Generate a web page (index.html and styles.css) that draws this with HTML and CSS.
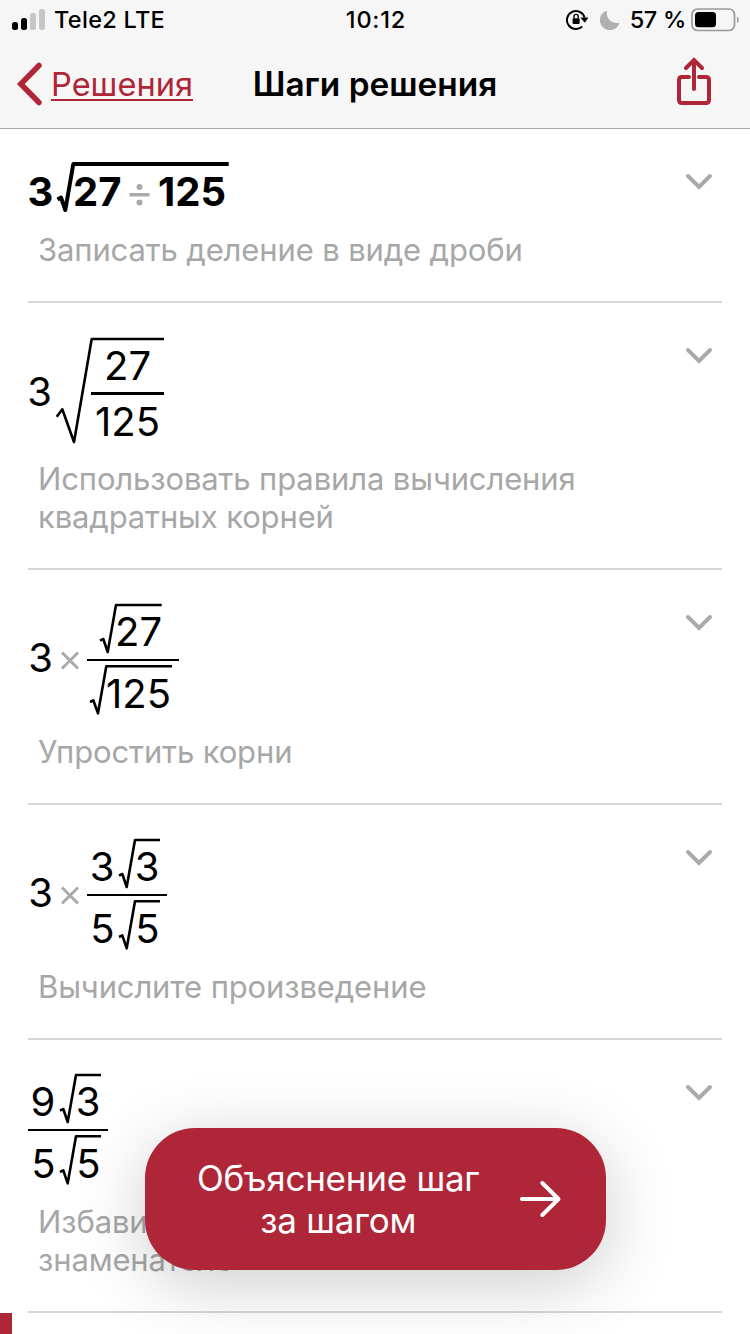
FILE: index.html
```
<!DOCTYPE html>
<html lang="ru">
<head>
<meta charset="utf-8">
<title>Шаги решения</title>
<link rel="stylesheet" href="styles.css">
</head>
<body>
<div class="screen">
  <header class="top">
    <div class="status">
      <div class="status-left">
        <svg class="signal" width="34" height="22" viewBox="0 0 34 22"><rect x="0" y="13" width="6" height="8" rx="2.5"/><rect x="9" y="9" width="6" height="12" rx="2.5"/><rect class="off" x="18" y="4" width="6" height="17" rx="2.5"/><rect class="off" x="27" y="0" width="6" height="21" rx="2.5"/></svg>
        <span class="carrier">Tele2 LTE</span>
      </div>
      <div class="time">10:12</div>
      <div class="status-right">
        <svg class="lock" width="23" height="22" viewBox="0 0 23 22"><path d="M16.200 17.500A9 9 0 1 1 18.600 8.500" fill="none" stroke="#000" stroke-width="2"/><path d="M14.400 8.500h8l-3.600 5.200z"/><rect x="6.600" y="9.300" width="7" height="5.700" rx="1"/><path d="M8 9.500V7.500a2.100 2.100 0 0 1 4.200 0v2" fill="none" stroke="#000" stroke-width="1.400"/></svg>
        <svg class="moon" width="20" height="20" viewBox="0 0 20 20"><path d="M7.300.4A10 10 0 1 0 19.600 12.400 9.600 9.600 0 0 1 7.300.4z"/></svg>
        <span class="percent">57 %</span>
        <svg class="battery" width="49" height="24" viewBox="0 0 49 24"><rect x="1" y="1" width="42.500" height="21.500" rx="5.500" fill="none" stroke="#999" stroke-width="1.700"/><rect x="4" y="4" width="21" height="15.300" rx="3.500"/><path d="M46 8.500q1.800 1 1.800 3.300T46 15z" fill="#999"/></svg>
      </div>
    </div>
    <nav class="nav">
      <a class="back"><svg width="26" height="44" viewBox="0 0 26 44"><path d="M23 3.500 4.800 22 23 40.500"/></svg><span class="back-label">Решения</span></a>
      <h1 class="title">Шаги решения</h1>
      <svg class="share" width="34" height="48" viewBox="0 0 34 48"><path d="M12 19H5q-3 0-3 3v20q0 3 3 3h24q3 0 3-3V22q0-3-3-3h-7M17 31V3M9 10 17 2l8 8"/></svg>
    </nav>
  </header>

  <main class="steps">
    <section class="step">
      <svg class="formula bold" width="220" height="60" viewBox="0 0 220 60">
        <text x="12.500" y="47.400">3</text>
        <path class="root" d="M29.500 40.500 33 38.500 37.300 51 45.300 5H200.700"/>
        <text x="69.300" y="47.400">27</text>
        <rect class="op" x="101.500" y="34" width="20" height="3.500"/><circle class="op" cx="111.500" cy="28" r="3"/><circle class="op" cx="111.500" cy="43.500" r="3"/>
        <text x="164" y="47.400">125</text>
      </svg>
      <p class="note">Записать деление в виде дроби</p>
      <svg class="chevron" width="28" height="18" viewBox="0 0 28 18"><path d="M3 3 14 14 25 3"/></svg>
    </section>

    <section class="step">
      <svg class="formula" width="220" height="115" viewBox="0 0 220 115">
        <text x="11.500" y="72.500">3</text>
        <path class="root" d="M28.700 83.700 34.300 76.300 46 109 63.700 6H136"/>
        <text x="99.500" y="47.300">27</text>
        <rect x="63" y="59" width="73" height="3"/>
        <text x="99.500" y="103.300">125</text>
      </svg>
      <p class="note">Использовать правила вычисления<br>квадратных корней</p>
      <svg class="chevron" width="28" height="18" viewBox="0 0 28 18"><path d="M3 3 14 14 25 3"/></svg>
    </section>

    <section class="step">
      <svg class="formula" width="220" height="121" viewBox="0 0 220 121">
        <text x="12.500" y="71.500">3</text><path class="times" d="M34 52.500 50 68.500M50 52.500 34 68.500"/>
        <path class="root" d="M72 40.700 75.300 39 79.700 52 88 5H133.700"/>
        <text x="110.500" y="46.300">27</text>
        <rect x="59" y="59" width="92" height="2"/>
        <path class="root" d="M62 102 65.300 100.300 70 113.300 78.300 66.300H144"/>
        <text x="110.500" y="107.500">125</text>
      </svg>
      <p class="note">Упростить корни</p>
      <svg class="chevron" width="28" height="18" viewBox="0 0 28 18"><path d="M3 3 14 14 25 3"/></svg>
    </section>

    <section class="step">
      <svg class="formula" width="220" height="121" viewBox="0 0 220 121">
        <text x="12.500" y="71.500">3</text><path class="times" d="M34 52.500 50 68.500M50 52.500 34 68.500"/>
        <text x="74" y="46.300">3</text>
        <path class="root" d="M91 40.700 94.300 39 98.700 52 107 5H132"/>
        <text x="119" y="46.300">3</text>
        <rect x="59" y="59" width="80" height="2"/>
        <text x="74.500" y="107.700">5</text>
        <path class="root" d="M91 102 94.300 100.300 98.700 113.300 107 66.300H132"/>
        <text x="119.500" y="107.700">5</text>
      </svg>
      <p class="note">Вычислите произведение</p>
      <svg class="chevron" width="28" height="18" viewBox="0 0 28 18"><path d="M3 3 14 14 25 3"/></svg>
    </section>

    <section class="step">
      <svg class="formula" width="220" height="121" viewBox="0 0 220 121">
        <text x="15" y="46.300">9</text>
        <path class="root" d="M32 40.700 35.300 39 39.700 52 48 5H73"/>
        <text x="60" y="46.300">3</text>
        <rect x="0" y="59" width="80" height="2"/>
        <text x="15.500" y="107.700">5</text>
        <path class="root" d="M32 102 35.300 100.300 39.700 113.300 48 66.300H73"/>
        <text x="60.500" y="107.700">5</text>
      </svg>
      <p class="note">Избавиться<br>знаменателе</p>
      <svg class="chevron" width="28" height="18" viewBox="0 0 28 18"><path d="M3 3 14 14 25 3"/></svg>
    </section>
  </main>

  <div class="progress"></div>
  <button class="explain">
    <span class="explain-label">Объяснение шаг<br>за шагом</span>
    <svg width="42" height="38" viewBox="0 0 42 38"><path d="M2 19H38.500M22.300 3 38.500 19 22.300 35"/></svg>
  </button>
</div>
</body>
</html>
```
FILE: styles.css
```
* { box-sizing: border-box; }
body {
  margin: 0;
  font-family: Inter, "Liberation Sans", sans-serif;
  color: #000;
  background: #fff;
}
.screen {
  position: relative;
  width: 750px;
  height: 1334px;
  overflow: hidden;
}
.top {
  height: 129px;
  background: #f6f6f6;
  border-bottom: 1px solid #a8a8a8;
}
.status {
  display: grid;
  grid-template-columns: 1fr auto 1fr;
  height: 40px;
  padding: 0 10px 0 12px;
  align-items: center;
  font-size: 23.5px;
  font-weight: 500;
  line-height: 40px;
}
.status-left, .status-right { display: flex; align-items: center; }
.status-right { justify-content: flex-end; }
.off { fill: #c6c6c6; }
.time { letter-spacing: 0.8px; }
.carrier { margin-left: 8px; letter-spacing: 0.3px; }
.lock { margin-right: 11px; }
.moon { fill: #b0b0b0; margin-right: 10px; }
.percent { letter-spacing: -0.3px; }
.battery { margin-left: 5px; }
.nav {
  display: grid;
  grid-template-columns: 1fr auto 1fr;
  align-items: center;
  height: 88px;
  padding: 0 16px;
}
.back { display: flex; align-items: center; color: #af2639; font-size: 32.6px; }
.back svg { fill: none; stroke: #af2639; stroke-width: 5.5; stroke-linecap: round; }
.back-label {
  margin-left: 9px;
  text-decoration: underline;
  text-decoration-thickness: 2px;
  text-underline-offset: 3px;
}
.title { margin: 0; font-size: 33.4px; font-weight: 600; line-height: 40px; }
.share {
  justify-self: end;
  margin: 0 23px 4px 0;
  fill: none;
  stroke: #af2639;
  stroke-width: 4;
  stroke-linecap: round;
  overflow: visible;
}
.steps { padding: 0 28px; }
.step {
  display: grid;
  grid-template-columns: 1fr auto;
  padding: 30px 9px 32px 0;
  border-bottom: 2px solid #d6d6d6;
}
.formula { display: block; grid-column: 1; }
.formula text { font-size: 40px; text-anchor: middle; }
.formula .op { fill: #aaa; }
.times { fill: none; stroke: #aaa; stroke-width: 3; }
.root { fill: none; stroke: #000; stroke-width: 2.6; stroke-linejoin: round; }
.bold text { font-weight: 700; }
.bold .root { stroke-width: 4; }
.note {
  grid-column: 1;
  margin: 12px 0 0 10px;
  font-size: 31px;
  line-height: 38px;
  letter-spacing: -0.13px;
  color: #a7a7a7;
  white-space: nowrap;
}
.chevron {
  grid-column: 2;
  grid-row: 1;
  margin-top: 14px;
  fill: none;
  stroke: #aaa;
  stroke-width: 4;
  stroke-linecap: round;
}
.progress {
  position: absolute;
  left: 0;
  bottom: 0;
  width: 12px;
  height: 21px;
  background: #af2639;
}
.explain {
  position: absolute;
  left: 145px;
  top: 1128px;
  width: 461px;
  height: 142px;
  display: flex;
  align-items: center;
  justify-content: space-between;
  padding: 0 44px 0 52px;
  border: 0;
  border-radius: 50px;
  background: #af2639;
  color: #fff;
  font: 400 35px/42px Inter, "Liberation Sans", sans-serif;
  letter-spacing: -0.25px;
  box-shadow: 0 14px 70px rgba(0, 0, 0, 0.2);
}
.explain-label { white-space: nowrap; }
.explain svg { fill: none; stroke: #fff; stroke-width: 4; stroke-linecap: round; stroke-linejoin: round; }
```
